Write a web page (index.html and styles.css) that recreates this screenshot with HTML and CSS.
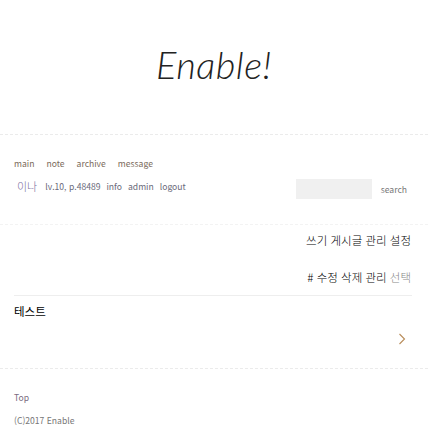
FILE: index.html
```html
<!DOCTYPE html>
<html lang="ko">
<head>
<meta charset="utf-8">
<link rel="stylesheet" href="styles.css">
</head>
<body>
<header class="header">
  <h1 class="title">Enable!</h1>
</header>
<nav class="nav">
  <div class="menu">
    <a>main</a><a>note</a><a>archive</a><a>message</a>
  </div>
  <div class="userrow">
    <div class="user">
      <span class="name">이나</span>
      <span class="meta">lv.10, p.48489</span>
      <a>info</a><a>admin</a><a>logout</a>
    </div>
    <div class="search">
      <span class="box"></span>
      <span class="stext">search</span>
    </div>
  </div>
</nav>
<section class="admin">
  <div class="arow arow1">쓰기 게시글 관리 설정</div>
  <div class="arow arow2"># 수정 삭제 관리 <span class="sel">선택</span></div>
</section>
<section class="post">
  <div class="ptitle">테스트</div>
  <div class="pnext">
    <svg width="8" height="12" viewBox="0 0 8 12"><path d="M1.5 1 L6.5 6 L1.5 11" fill="none" stroke="#b88c5a" stroke-width="1.1"/></svg>
  </div>
</section>
<footer class="footer">
  <div class="top">Top</div>
  <div class="copy">(C)2017 Enable</div>
</footer>
</body>
</html>
```
FILE: styles.css
```css
html, body { margin: 0; padding: 0; background: #fff; }
body { font-family: "Noto Sans CJK KR", "Open Sans", sans-serif; color: #666; width: 428px; }
a { color: inherit; text-decoration: none; }
.header { height: 135px; border-bottom: 1px dashed #ebebeb; display: flex; align-items: center; justify-content: center; box-sizing: border-box; }
.title { margin: 0; font-family: "Lato", sans-serif; font-weight: 300; font-style: italic; font-size: 38px; color: #222; letter-spacing: 0.5px; padding-bottom: 6px; }
.nav { padding: 20px 14px 0 14px; height: 90px; box-sizing: border-box; border-bottom: 1px dashed #f3f3f3; }
.menu { display: flex; gap: 12px; font-size: 8.6px; color: #7a6a5a; height: 16px; align-items: center; }
.userrow { display: flex; justify-content: space-between; align-items: center; margin-top: 2px; }
.user { display: flex; align-items: center; gap: 6px; font-size: 8.6px; color: #6a6a7a; padding-left: 3px; }
.name { font-size: 11px; color: #7b6ea0; margin-right: 2px; font-weight: 300; }
.search { display: flex; align-items: center; gap: 9px; margin-right: 7px; margin-top: 6px; }
.box { width: 76px; height: 20px; background: #f0f0f0; display: block; }
.stext { font-size: 8.6px; color: #777; }
.admin { padding: 0 17px 0 14px; height: 70px; }
.arow { text-align: right; font-size: 11.5px; color: #000; font-weight: 300; }
.arow1 { padding-top: 7px; }
.arow2 { margin-top: 21px; }
.sel { color: #888; }
.post { margin: 0 16px 0 14px; border-top: 1px solid #eeeeee; height: 73px; box-sizing: border-box; }
.ptitle { font-size: 11.5px; font-weight: 400; color: #000; margin-top: 7px; }
.pnext { display: flex; justify-content: flex-end; margin-top: 14px; padding-right: 6px; }
.footer { border-top: 1px dashed #ebebeb; padding: 22px 14px 0 14px; font-size: 8.6px; color: #7a6a80; }
.copy { margin-top: 11px; color: #777; }
```
